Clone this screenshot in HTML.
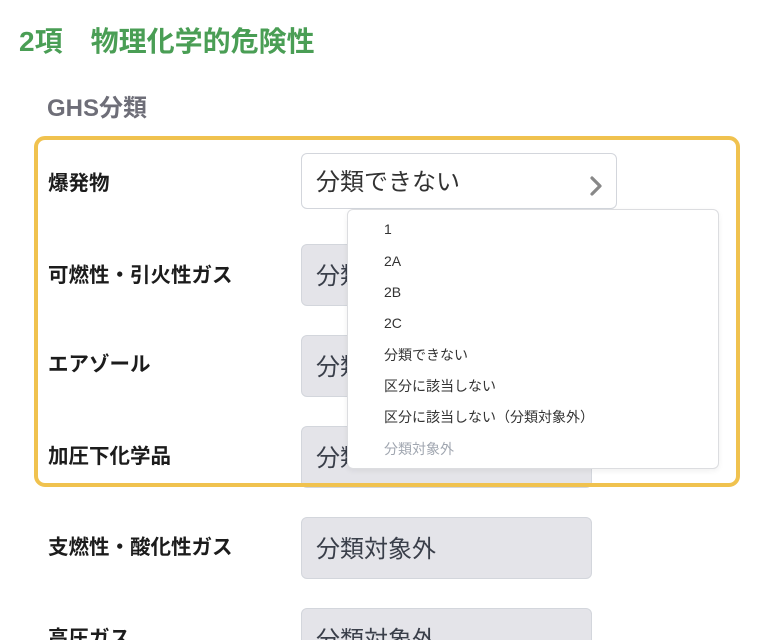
<!DOCTYPE html>
<html><head><meta charset="utf-8"><style>
*{box-sizing:border-box;margin:0;padding:0}
html,body{width:764px;height:640px;overflow:hidden}
body{background:#fff;position:relative;font-family:"Liberation Sans","Noto Sans CJK JP",sans-serif;color:#222}
.a{position:absolute}
h1{position:absolute;left:19px;top:24px;font-size:28px;font-weight:bold;color:#4a9e55;white-space:pre;line-height:36px}
h2{position:absolute;left:47px;top:94px;font-size:24px;font-weight:bold;color:#6e6e78;line-height:30px}
.frame{left:34px;top:136px;width:706px;height:351px;border:4px solid #f0c24f;border-radius:11px}
.lbl{position:absolute;left:48px;font-size:20.5px;font-weight:bold;color:#1c1c1c;line-height:26px}
.box{position:absolute;left:301px;width:291px;height:62px;background:#e4e4e9;border:1.5px solid #d3d6dc;border-radius:6px;font-size:24px;color:#3a3f4a;padding:17px 0 0 14px;line-height:30px}
.sel{left:301px;top:153px;width:316px;height:56px;background:#fff;border:1.5px solid #d3d6dc;border-radius:6px;font-size:24px;color:#333;padding:14px 0 0 14px;line-height:30px}
.dd{left:347px;top:209px;width:372px;height:260px;background:#fff;border:1px solid #dcdde0;border-radius:6px;box-shadow:0 2px 6px rgba(0,0,0,.06)}
.it{position:absolute;left:36px;font-size:14px;color:#333;line-height:18px}
</style></head><body>
<h1>2項　物理化学的危険性</h1>
<h2>GHS分類</h2>
<div class="lbl" style="top:171px">爆発物</div>
<div class="lbl" style="top:263px">可燃性・引火性ガス</div>
<div class="lbl" style="top:352px">エアゾール</div>
<div class="lbl" style="top:444px">加圧下化学品</div>
<div class="lbl" style="top:535px">支燃性・酸化性ガス</div>
<div class="lbl" style="top:626px">高圧ガス</div>
<div class="box" style="top:244px">分類対象外</div>
<div class="box" style="top:335px">分類対象外</div>
<div class="box" style="top:426px">分類対象外</div>
<div class="box" style="top:517px">分類対象外</div>
<div class="box" style="top:608px">分類対象外</div>
<div class="a frame"></div>
<div class="a sel">分類できない
<svg class="a" style="left:286px;top:22px" width="16" height="20" viewBox="0 0 16 20"><path d="M4 2l8 8-8 8" fill="none" stroke="#888" stroke-width="3.2" stroke-linecap="round" stroke-linejoin="round"/></svg></div>
<div class="a dd">
<div class="it" style="top:10px">1</div>
<div class="it" style="top:42px">2A</div>
<div class="it" style="top:73px">2B</div>
<div class="it" style="top:104px">2C</div>
<div class="it" style="top:136px">分類できない</div>
<div class="it" style="top:167px">区分に該当しない</div>
<div class="it" style="top:198px">区分に該当しない（分類対象外）</div>
<div class="it" style="top:230px;color:#a0a6b0">分類対象外</div>
</div>
</body></html>
